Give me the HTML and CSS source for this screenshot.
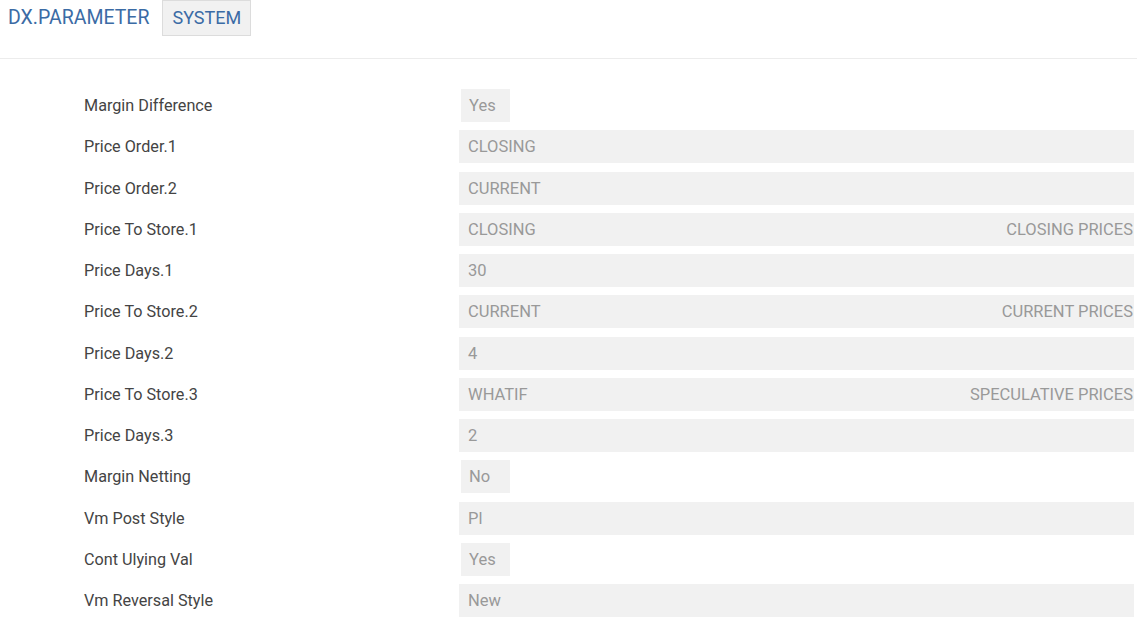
FILE: index.html
```html
<!DOCTYPE html>
<html lang="en">
<head>
    <meta charset="UTF-8">
    <meta name="viewport" content="width=device-width, initial-scale=1.0">
    <title>DX.PARAMETER</title>
    <link rel="stylesheet" href="styles.css">
</head>
<body>
    <div class="header">
        <span class="title">DX.PARAMETER</span>
        <span class="tag">SYSTEM</span>
    </div>

    <div class="fields">
        <div class="row">
            <div class="label">Margin Difference</div>
            <div class="value"><span class="box small">Yes</span></div>
        </div>
        <div class="row">
            <div class="label">Price Order.1</div>
            <div class="value"><span class="box">CLOSING</span></div>
        </div>
        <div class="row">
            <div class="label">Price Order.2</div>
            <div class="value"><span class="box">CURRENT</span></div>
        </div>
        <div class="row">
            <div class="label">Price To Store.1</div>
            <div class="value"><span class="box">CLOSING<span class="desc">CLOSING PRICES</span></span></div>
        </div>
        <div class="row">
            <div class="label">Price Days.1</div>
            <div class="value"><span class="box">30</span></div>
        </div>
        <div class="row">
            <div class="label">Price To Store.2</div>
            <div class="value"><span class="box">CURRENT<span class="desc">CURRENT PRICES</span></span></div>
        </div>
        <div class="row">
            <div class="label">Price Days.2</div>
            <div class="value"><span class="box">4</span></div>
        </div>
        <div class="row">
            <div class="label">Price To Store.3</div>
            <div class="value"><span class="box">WHATIF<span class="desc">SPECULATIVE PRICES</span></span></div>
        </div>
        <div class="row">
            <div class="label">Price Days.3</div>
            <div class="value"><span class="box">2</span></div>
        </div>
        <div class="row">
            <div class="label">Margin Netting</div>
            <div class="value"><span class="box small">No</span></div>
        </div>
        <div class="row">
            <div class="label">Vm Post Style</div>
            <div class="value"><span class="box">Pl</span></div>
        </div>
        <div class="row">
            <div class="label">Cont Ulying Val</div>
            <div class="value"><span class="box small">Yes</span></div>
        </div>
        <div class="row">
            <div class="label">Vm Reversal Style</div>
            <div class="value"><span class="box">New</span></div>
        </div>
    </div>
</body>
</html>
```

FILE: styles.css
```css
* {
    margin: 0;
    padding: 0;
    box-sizing: border-box;
}

body {
    font-family: Roboto, 'Liberation Sans', Arial, sans-serif;
    background: white;
    color: #444;
}

.header {
    display: flex;
    align-items: flex-start;
    height: 59px;
    padding-left: 8px;
    border-bottom: 1px solid #ececec;
}

.title {
    font-size: 19.5px;
    line-height: 35px;
    color: #3b6ba5;
    margin-right: 13px;
}

.tag {
    height: 36px;
    padding: 0 9px;
    font-size: 18px;
    line-height: 34px;
    color: #3b6ba5;
    background: #f1f1f1;
    border: 1px solid #dcdcdc;
}

.fields {
    padding: 30px 3px 0 84px;
}

.row {
    display: flex;
    align-items: center;
    height: 33px;
    margin-bottom: 8.25px;
}

.label {
    width: 375px;
    font-size: 16.2px;
}

.value {
    flex: 1;
}

.box {
    display: flex;
    justify-content: space-between;
    height: 33px;
    padding: 0 1px 0 9px;
    font-size: 16.5px;
    line-height: 33px;
    color: #999;
    background: #f1f1f1;
}

.box.small {
    width: 49px;
    margin-left: 2px;
    padding-left: 8px;
}
```
